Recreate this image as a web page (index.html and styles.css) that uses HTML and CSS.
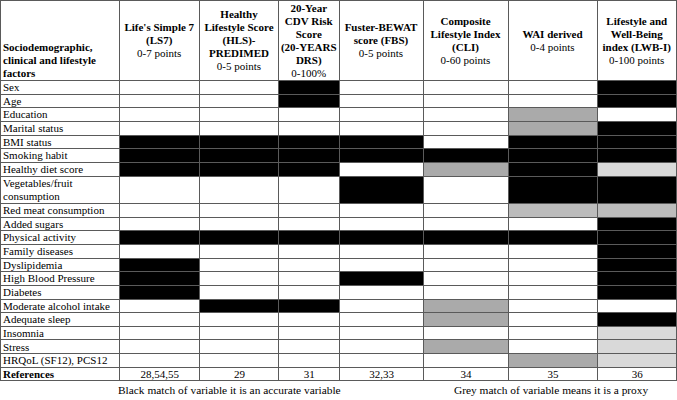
FILE: index.html
```html
<!DOCTYPE html>
<html>
<head>
<meta charset="utf-8">
<link rel="stylesheet" href="styles.css">
</head>
<body>
<table class="grid">
<colgroup>
<col class="c0"><col class="c1"><col class="c2"><col class="c3"><col class="c4"><col class="c5"><col class="c6"><col class="c7">
</colgroup>
<thead>
<tr class="head">
<th class="factor"><b>Sociodemographic,<br>clinical and lifestyle<br>factors</b></th>
<th><b>Life's Simple 7<br>(LS7)</b><br>0-7 points</th>
<th><b>Healthy<br>Lifestyle Score<br>(HLS)-<br>PREDIMED</b><br>0-5 points</th>
<th><b>20-Year<br>CDV Risk<br>Score<br>(20-YEARS<br>DRS)</b><br>0-100%</th>
<th><b>Fuster-BEWAT<br>score (FBS)</b><br>0-5 points</th>
<th><b>Composite<br>Lifestyle Index<br>(CLI)</b><br>0-60 points</th>
<th><b>WAI derived</b><br>0-4 points</th>
<th><b>Lifestyle and<br>Well-Being<br>index (LWB-I)</b><br>0-100 points</th>
</tr>
</thead>
<tbody>
<tr><td>Sex</td><td></td><td></td><td class="k"></td><td></td><td></td><td></td><td class="k"></td></tr>
<tr><td>Age</td><td></td><td></td><td class="k"></td><td></td><td></td><td></td><td class="k"></td></tr>
<tr><td>Education</td><td></td><td></td><td></td><td></td><td></td><td class="g"></td><td></td></tr>
<tr><td>Marital status</td><td></td><td></td><td></td><td></td><td></td><td class="g"></td><td class="k"></td></tr>
<tr><td>BMI status</td><td class="k"></td><td class="k"></td><td class="k"></td><td class="k"></td><td></td><td class="k"></td><td class="k"></td></tr>
<tr><td>Smoking habit</td><td class="k"></td><td class="k"></td><td class="k"></td><td class="k"></td><td class="k"></td><td class="k"></td><td class="k"></td></tr>
<tr><td>Healthy diet score</td><td class="k"></td><td class="k"></td><td class="k"></td><td></td><td class="g"></td><td class="k"></td><td class="lg"></td></tr>
<tr class="tall"><td>Vegetables/fruit<br>consumption</td><td></td><td></td><td></td><td class="k"></td><td></td><td class="k"></td><td class="k"></td></tr>
<tr><td>Red meat consumption</td><td></td><td></td><td></td><td></td><td></td><td class="mg"></td><td class="mg"></td></tr>
<tr><td>Added sugars</td><td></td><td></td><td></td><td></td><td></td><td></td><td class="k"></td></tr>
<tr><td>Physical activity</td><td class="k"></td><td class="k"></td><td class="k"></td><td class="k"></td><td class="k"></td><td class="k"></td><td class="k"></td></tr>
<tr><td>Family diseases</td><td></td><td></td><td></td><td></td><td></td><td></td><td class="k"></td></tr>
<tr><td>Dyslipidemia</td><td class="k"></td><td></td><td></td><td></td><td></td><td></td><td class="k"></td></tr>
<tr><td>High Blood Pressure</td><td class="k"></td><td></td><td></td><td class="k"></td><td></td><td></td><td class="k"></td></tr>
<tr><td>Diabetes</td><td class="k"></td><td></td><td></td><td></td><td></td><td></td><td class="k"></td></tr>
<tr><td>Moderate alcohol intake</td><td></td><td class="k"></td><td class="k"></td><td></td><td class="g"></td><td></td><td></td></tr>
<tr><td>Adequate sleep</td><td></td><td></td><td></td><td></td><td class="g"></td><td></td><td class="k"></td></tr>
<tr><td>Insomnia</td><td></td><td></td><td></td><td></td><td></td><td></td><td class="lg"></td></tr>
<tr><td>Stress</td><td></td><td></td><td></td><td></td><td class="g"></td><td></td><td class="lg"></td></tr>
<tr><td>HRQoL (SF12), PCS12</td><td></td><td></td><td></td><td></td><td></td><td class="g"></td><td class="lg"></td></tr>
<tr class="refs"><td><b>References</b></td><td>28,54,55</td><td>29</td><td>31</td><td>32,33</td><td>34</td><td>35</td><td>36</td></tr>
</tbody>
</table>
<div class="legend">
<span class="black-note">Black match of variable it is an accurate variable</span>
<span class="grey-note">Grey match of variable means it is a proxy</span>
</div>
</body>
</html>
```

FILE: styles.css
```css
html, body {
  margin: 0;
  padding: 0;
  background: #ffffff;
}
body {
  font-family: "Liberation Serif", "Times New Roman", serif;
  font-size: 11px;
  color: #000;
}
.grid {
  border-collapse: collapse;
  table-layout: fixed;
  width: 676px;
  font-family: "Liberation Serif", "Times New Roman", serif;
}
.c0 { width: 118.5px; }
.c1 { width: 80.5px; }
.c2 { width: 79px; }
.c3 { width: 60.5px; }
.c4 { width: 84px; }
.c5 { width: 85px; }
.c6 { width: 89px; }
.c7 { width: 79.5px; }
.grid th, .grid td {
  border: 1px solid #5a5a5a;
  padding: 0 1px 0 2px;
  line-height: 12.4px;
  font-size: 11px;
  overflow: hidden;
  white-space: nowrap;
}
.grid th {
  font-weight: normal;
  text-align: center;
  vertical-align: middle;
  line-height: 13px;
  padding: 0;
}
.grid th.factor {
  text-align: left;
  vertical-align: bottom;
  padding: 0 0 0 2px;
}
.head { height: 80px; }
.grid tbody tr { height: 13.67px; }
.grid tbody tr.tall { height: 27.34px; }
.grid td { vertical-align: middle; }
.grid tr.tall td:first-child { line-height: 13px; }
.refs td { text-align: center; }
.refs td:first-child { text-align: left; }
.k { background: #000000; }
.g { background: #aaaaaa; }
.mg { background: #bcbcbc; }
.lg { background: #d9d9d9; }
.legend {
  display: flex;
  font-size: 11.4px;
  padding: 2px 0 0 118px;
  line-height: 14px;
}
.black-note { width: 336px; }
```
